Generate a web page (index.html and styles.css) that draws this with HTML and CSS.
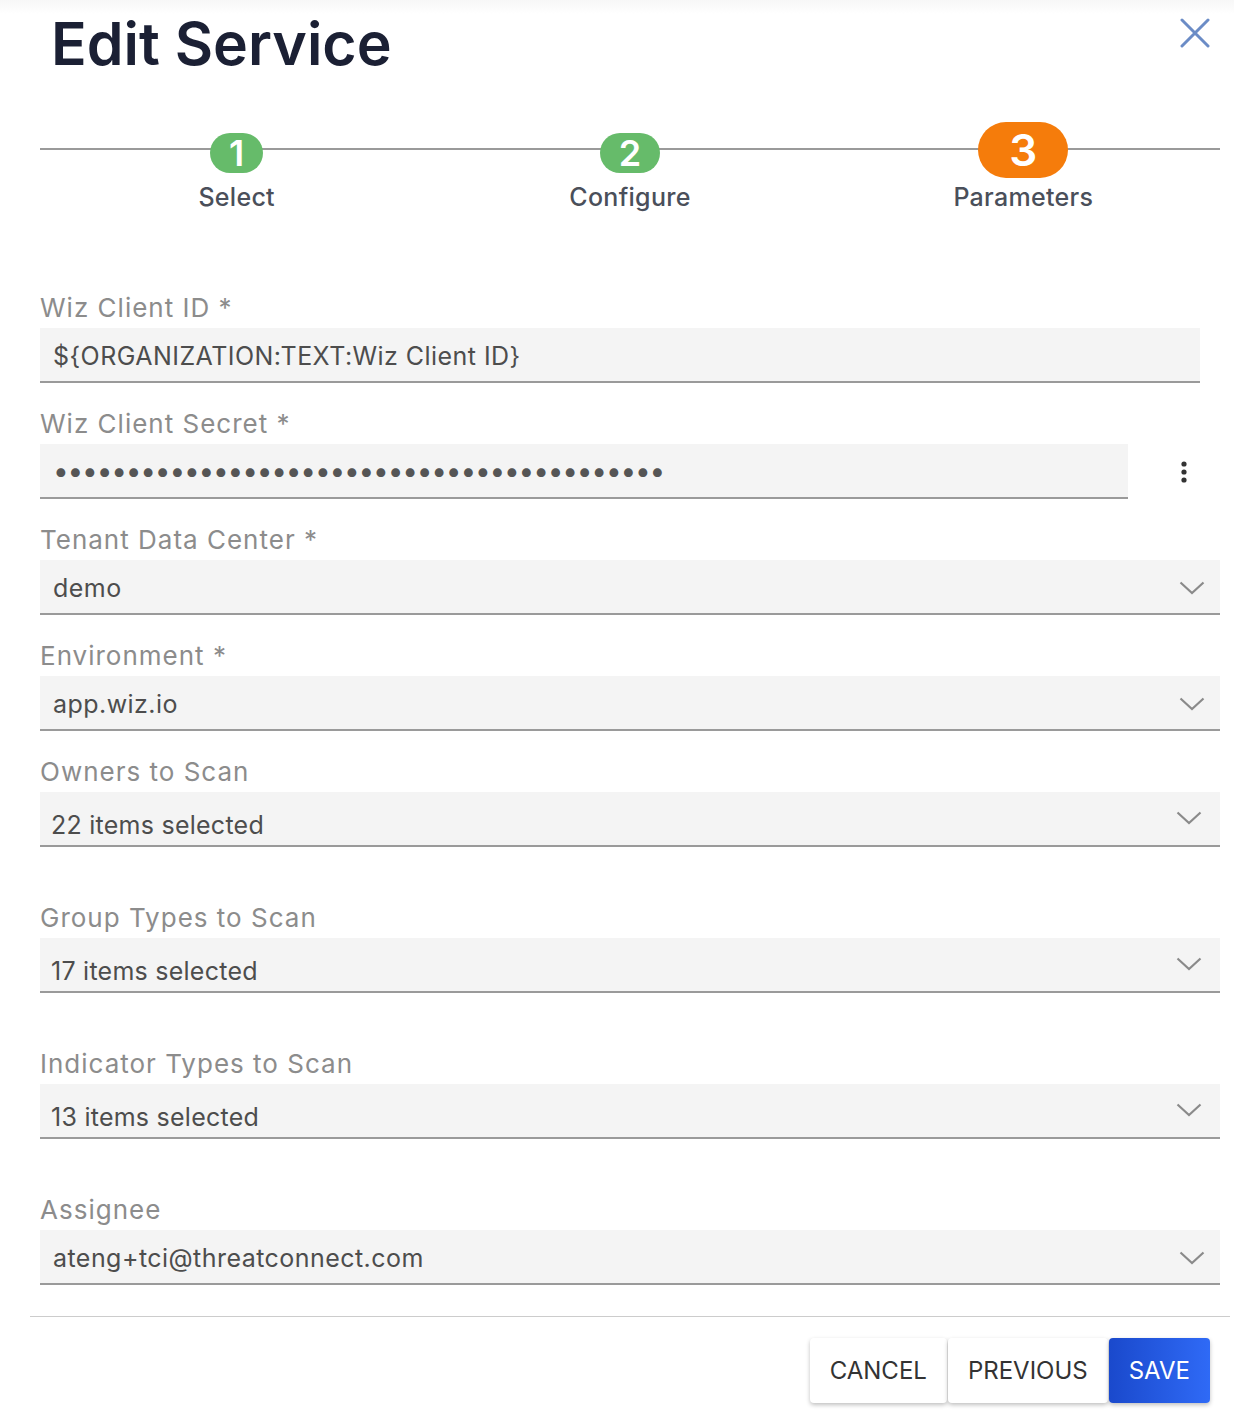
FILE: index.html
```html
<!DOCTYPE html>
<html lang="en">
<head>
    <meta charset="UTF-8">
    <meta name="viewport" content="width=device-width, initial-scale=1.0">
    <title>Edit Service</title>
    <link rel="stylesheet" href="styles.css">
</head>
<body>

    <!-- Dialog -->
    <div class="dialog">
        <div class="dialog-header">
            <h1 class="dialog-title">Edit Service</h1>
            <button class="close-button" aria-label="Close">
                <svg width="30" height="30" viewBox="0 0 30 30">
                    <path d="M2 2 L28 28 M28 2 L2 28" stroke="#6b8cc6" stroke-width="3" stroke-linecap="round" fill="none"/>
                </svg>
            </button>
        </div>

        <!-- Stepper -->
        <div class="stepper">
            <div class="step">
                <div class="step-row"><span class="step-badge done">1</span></div>
                <div class="step-label">Select</div>
            </div>
            <div class="step">
                <div class="step-row"><span class="step-badge done wide">2</span></div>
                <div class="step-label">Configure</div>
            </div>
            <div class="step">
                <div class="step-row"><span class="step-badge active">3</span></div>
                <div class="step-label">Parameters</div>
            </div>
        </div>

        <!-- Parameters form -->
        <form class="params-form">
            <div class="field">
                <label class="field-label">Wiz Client ID *</label>
                <div class="input-box short">${ORGANIZATION:TEXT:Wiz Client ID}</div>
            </div>

            <div class="field">
                <label class="field-label">Wiz Client Secret *</label>
                <div class="input-row">
                    <div class="input-box secret"><span class="dots">••••••••••••••••••••••••••••••••••••••••••</span></div>
                    <button type="button" class="more-button" aria-label="More">
                        <svg width="8" height="24" viewBox="0 0 8 24">
                            <circle cx="4" cy="4" r="2.6" fill="#333"/>
                            <circle cx="4" cy="12" r="2.6" fill="#333"/>
                            <circle cx="4" cy="20" r="2.6" fill="#333"/>
                        </svg>
                    </button>
                </div>
            </div>

            <div class="field">
                <label class="field-label">Tenant Data Center *</label>
                <div class="input-box select">demo<svg class="chevron" width="26" height="14" viewBox="0 0 26 14"><path d="M1.5 1.5 L13 12 L24.5 1.5" stroke="#8a8a8a" stroke-width="2.2" fill="none"/></svg></div>
            </div>

            <div class="field">
                <label class="field-label">Environment *</label>
                <div class="input-box select">app.wiz.io<svg class="chevron" width="26" height="14" viewBox="0 0 26 14"><path d="M1.5 1.5 L13 12 L24.5 1.5" stroke="#8a8a8a" stroke-width="2.2" fill="none"/></svg></div>
            </div>

            <div class="field multi">
                <label class="field-label">Owners to Scan</label>
                <div class="input-box select multi-box">22 items selected<svg class="chevron" width="26" height="14" viewBox="0 0 26 14"><path d="M1.5 1.5 L13 12 L24.5 1.5" stroke="#8a8a8a" stroke-width="2.2" fill="none"/></svg></div>
            </div>

            <div class="field multi">
                <label class="field-label">Group Types to Scan</label>
                <div class="input-box select multi-box">17 items selected<svg class="chevron" width="26" height="14" viewBox="0 0 26 14"><path d="M1.5 1.5 L13 12 L24.5 1.5" stroke="#8a8a8a" stroke-width="2.2" fill="none"/></svg></div>
            </div>

            <div class="field multi">
                <label class="field-label">Indicator Types to Scan</label>
                <div class="input-box select multi-box">13 items selected<svg class="chevron" width="26" height="14" viewBox="0 0 26 14"><path d="M1.5 1.5 L13 12 L24.5 1.5" stroke="#8a8a8a" stroke-width="2.2" fill="none"/></svg></div>
            </div>

            <div class="field last">
                <label class="field-label">Assignee</label>
                <div class="input-box select">ateng+tci@threatconnect.com<svg class="chevron" width="26" height="14" viewBox="0 0 26 14"><path d="M1.5 1.5 L13 12 L24.5 1.5" stroke="#8a8a8a" stroke-width="2.2" fill="none"/></svg></div>
            </div>
        </form>

        <!-- Footer buttons -->
        <div class="dialog-footer">
            <button class="footer-button">CANCEL</button>
            <button class="footer-button">PREVIOUS</button>
            <button class="footer-button save">SAVE</button>
        </div>
    </div>

</body>
</html>
```

FILE: styles.css
```css
body {
    margin: 0;
    font-family: Inter, "Noto Sans", sans-serif;
    background: linear-gradient(#f7f7f7, #ffffff 14px) no-repeat;
    background-color: #ffffff;
}

.dialog {
    width: 1234px;
}

/* Header with title and close icon */
.dialog-header {
    display: flex;
    justify-content: space-between;
    align-items: flex-start;
    padding: 4px 24px 0 51px;
}

.dialog-title {
    margin: 0;
    font-size: 59px;
    line-height: 80px;
    font-weight: 600;
    color: #1b2034;
}

.close-button {
    background: none;
    border: none;
    padding: 0;
    margin-top: 14px;
    width: 30px;
    height: 30px;
    cursor: pointer;
}

/* Stepper */
.stepper {
    display: grid;
    grid-template-columns: repeat(3, 1fr);
    margin: 38px 14px 0 40px;
    background-image: linear-gradient(#9a9a9a, #9a9a9a);
    background-size: 100% 2px;
    background-position: 0 26px;
    background-repeat: no-repeat;
}

.step {
    display: flex;
    flex-direction: column;
    align-items: center;
}

.step-row {
    height: 56px;
    display: flex;
    align-items: center;
}

.step-badge {
    display: flex;
    align-items: center;
    justify-content: center;
    color: #ffffff;
    font-weight: 600;
    border-radius: 20px;
}

.step-badge.done {
    background-color: #66bb6a;
    width: 53px;
    height: 40px;
    font-size: 36px;
    margin-top: 6px;
}

.step-badge.wide {
    width: 60px;
}

.step-badge.active {
    background-color: #f57c0b;
    width: 90px;
    height: 56px;
    font-size: 44px;
    border-radius: 28px;
}

.step-label {
    margin-top: 3px;
    font-size: 25px;
    line-height: 32px;
    font-weight: 500;
    letter-spacing: 0.3px;
    color: #4a4f5a;
}

/* Form fields */
.params-form {
    margin: 79px 14px 0 40px;
}

.field {
    margin-bottom: 25px;
}

.field.multi {
    margin-bottom: 55px;
}

.field.last {
    margin-bottom: 0;
}

.field-label {
    display: block;
    font-size: 26px;
    line-height: 32px;
    letter-spacing: 1px;
    color: #8c8c8c;
    margin-bottom: 4px;
}

.input-box {
    box-sizing: border-box;
    height: 55px;
    padding: 2px 12px 0 13px;
    background-color: #f4f4f4;
    border-bottom: 2px solid #9a9a9a;
    font-size: 25px;
    line-height: 32px;
    letter-spacing: 0.45px;
    color: #4d4d4d;
    display: flex;
    align-items: center;
}

.input-box.short {
    margin-right: 20px;
}

.input-box.select {
    justify-content: space-between;
}

.input-box.multi-box {
    align-items: flex-start;
    padding: 17px 18px 0 11px;
    letter-spacing: 0.25px;
}

.chevron {
    margin-right: 3px;
}

.multi-box .chevron {
    margin-top: 2px;
    margin-right: 0;
}

.input-row {
    display: flex;
}

.input-box.secret {
    flex: 1;
    padding-top: 0;
}

.dots {
    font-size: 28px;
    letter-spacing: -1.2px;
    color: #555;
}

.more-button {
    width: 72px;
    margin-left: 20px;
    background: none;
    border: none;
    padding: 0;
    display: flex;
    justify-content: center;
    align-items: center;
}

/* Footer */
.dialog-footer {
    margin: 31px 4px 0 30px;
    border-top: 1px solid #cccccc;
    padding: 21px 20px 20px 0;
    display: flex;
    justify-content: flex-end;
    gap: 1px;
}

.footer-button {
    height: 65px;
    padding: 0 20px;
    font-family: Inter, "Noto Sans", sans-serif;
    font-size: 24px;
    color: #333333;
    background-color: #ffffff;
    border: none;
    border-radius: 4px;
    box-shadow: 0 2px 4px rgba(0, 0, 0, 0.25);
    cursor: pointer;
}

.footer-button.save {
    background: linear-gradient(90deg, #1a49cc, #2f6af6);
    color: #ffffff;
}
```
